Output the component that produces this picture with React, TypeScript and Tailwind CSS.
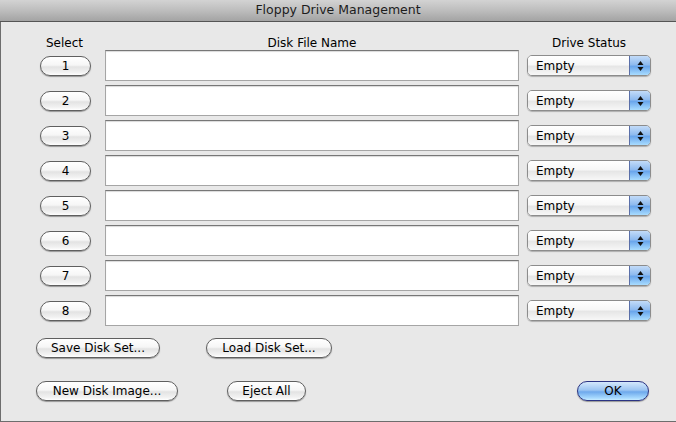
import React from 'react';

// Aqua 風のピル型ボタン
function PillButton({
  label,
  width,
  primary = false,
}: {
  label: string;
  width: string;
  primary?: boolean;
}) {
  const base =
    'h-[20px] rounded-full border text-[12px] leading-none flex items-center justify-center shadow-[0_1px_1px_rgba(0,0,0,0.35)] text-black';
  const look = primary
    ? 'border-[#2b3483] bg-[linear-gradient(to_bottom,#d4e8fc_0%,#9cc5f2_45%,#6ea9ec_55%,#a9dbff_90%,#c9ecff_100%)]'
    : 'border-[#5f5f5f] bg-[linear-gradient(to_bottom,#ffffff_0%,#f6f6f6_45%,#e3e3e3_55%,#f2f2f2_85%,#ffffff_100%)]';
  return (
    <button type="button" className={`${base} ${look} ${width}`}>
      {label}
    </button>
  );
}

// ポップアップメニュー（Empty）
function StatusSelect() {
  return (
    <div className="w-[124px] h-[21px] rounded-[5px] border border-[#8c8c8c] flex overflow-hidden shadow-[0_1px_1px_rgba(0,0,0,0.25)]">
      <div className="flex-1 flex items-center pl-[8px] text-[12px] bg-[linear-gradient(to_bottom,#ffffff_0%,#f7f7f7_45%,#e6e6e6_55%,#f7f7f7_100%)]">
        Empty
      </div>
      <div className="w-[21px] border-l border-[#5a6fa8] flex items-center justify-center bg-[linear-gradient(to_bottom,#c2dbf8_0%,#8fbbef_45%,#6aa6ec_55%,#a8dcff_100%)]">
        <svg width="7" height="12" viewBox="0 0 7 12">
          <path d="M3.5 1 L6.5 5 L0.5 5 Z" fill="#111" />
          <path d="M3.5 11 L6.5 7 L0.5 7 Z" fill="#111" />
        </svg>
      </div>
    </div>
  );
}

export default function App() {
  const drives = [1, 2, 3, 4, 5, 6, 7, 8];

  return (
    <div className="w-[676px] h-[422px] flex flex-col bg-[#e8e8e8] font-['DejaVu_Sans','Liberation_Sans',sans-serif] text-black overflow-hidden">
      {/* タイトルバー */}
      <div className="h-[22px] shrink-0 flex items-center justify-center border-b border-[#555] bg-[linear-gradient(to_bottom,#d3d3d3_0%,#bdbdbd_50%,#a3a3a3_100%)] text-[12.5px] text-[#1c1c1c]">
        Floppy Drive Management
      </div>

      <div className="flex-1 flex flex-col border-l border-b border-[#6d6d6d] pt-[13px]">
        {/* 見出し */}
        <div className="flex h-[15px] items-center text-[12px] pl-[38px]">
          <div className="w-[51px] text-center">Select</div>
          <div className="ml-[15px] w-[414px] text-center">Disk File Name</div>
          <div className="ml-[8px] w-[124px] text-center">Drive Status</div>
        </div>

        {/* ドライブ行 */}
        <div className="flex flex-col gap-[4px]">
          {drives.map((n) => (
            <div key={n} className="flex items-center h-[31px] pl-[39px]">
              <PillButton label={String(n)} width="w-[51px]" />
              <div className="ml-[14px] w-[414px] h-[31px] bg-white border border-[#a5a5a5] border-t-[#777] shadow-[inset_0_1px_1px_rgba(0,0,0,0.15)]" />
              <div className="ml-[8px]">
                <StatusSelect />
              </div>
            </div>
          ))}
        </div>

        {/* 下部ボタン */}
        <div className="flex items-center mt-[12px] pl-[35px]">
          <PillButton label="Save Disk Set..." width="w-[124px]" />
          <div className="ml-[46px]">
            <PillButton label="Load Disk Set..." width="w-[126px]" />
          </div>
        </div>

        <div className="flex items-center mt-[23px] pl-[35px]">
          <PillButton label="New Disk Image..." width="w-[142px]" />
          <div className="ml-[49px]">
            <PillButton label="Eject All" width="w-[79px]" />
          </div>
          <div className="ml-auto mr-[27px]">
            <PillButton label="OK" width="w-[72px]" primary />
          </div>
        </div>
      </div>
    </div>
  );
}
